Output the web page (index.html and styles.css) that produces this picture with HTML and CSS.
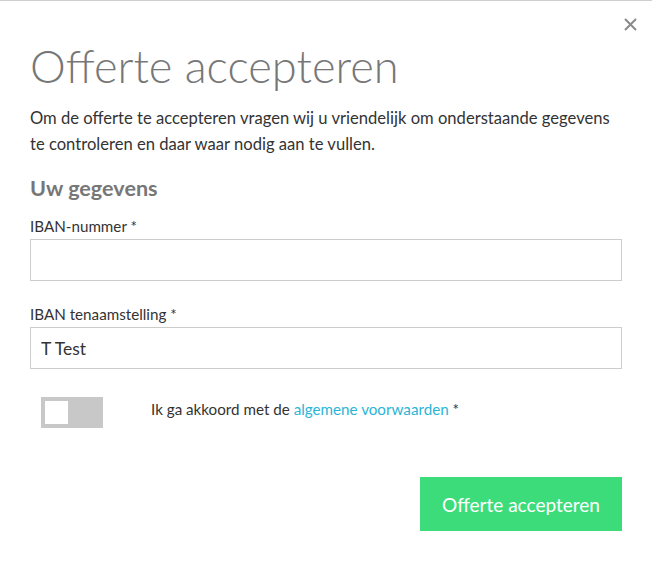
FILE: index.html
```html
<!DOCTYPE html>
<html lang="nl">
<head>
<meta charset="utf-8">
<title>Offerte accepteren</title>
<link rel="stylesheet" href="styles.css">
</head>
<body>
<div class="modal">
  <button class="close" aria-label="Sluiten">
    <svg width="13" height="13" viewBox="0 0 13 13"><path d="M1 1L12 12M12 1L1 12" stroke="#8a8a8a" stroke-width="2" fill="none"/></svg>
  </button>
  <h1 class="title">Offerte accepteren</h1>
  <p class="intro">Om de offerte te accepteren vragen wij u vriendelijk om onderstaande gegevens te controleren en daar waar nodig aan te vullen.</p>
  <h2 class="subtitle">Uw gegevens</h2>
  <div class="field">
    <label class="label">IBAN-nummer *</label>
    <input class="input" type="text" value="">
  </div>
  <div class="field">
    <label class="label">IBAN tenaamstelling *</label>
    <input class="input" type="text" value="T Test">
  </div>
  <div class="agree">
    <span class="toggle"><span class="knob"></span></span>
    <span class="agree-text">Ik ga akkoord met de <a class="link" href="#">algemene voorwaarden</a> *</span>
  </div>
  <div class="actions">
    <button class="submit">Offerte accepteren</button>
  </div>
</div>
</body>
</html>
```

FILE: styles.css
```css
* { box-sizing: border-box; }
html, body { margin: 0; padding: 0; background: #fff; }
body { font-family: Lato, "Open Sans", sans-serif; color: #333; }
.modal {
  position: relative;
  border-top: 1px solid #cfcfcf;
  padding: 0 30px;
  height: 577px;
}
.close {
  position: absolute;
  top: 17px;
  right: 15px;
  background: none;
  border: 0;
  padding: 0;
  width: 13px;
  height: 13px;
  display: flex;
}
.title {
  margin: 0;
  padding-top: 38px;
  font-weight: 300;
  font-size: 45.2px;
  line-height: 54px;
  color: #777;
}
.intro {
  margin: 12px 0 0;
  font-size: 16.6px;
  line-height: 26px;
  color: #333;
  max-width: 592px;
}
.subtitle {
  margin: 17px 0 0;
  font-size: 21.6px;
  line-height: 28px;
  font-weight: 700;
  color: #777;
}
.field { display: flex; flex-direction: column; }
.field + .field { margin-top: 23px; }
.label {
  margin-top: 14px;
  font-size: 15.2px;
  line-height: 20px;
  color: #333;
  margin-bottom: 3px;
}
.field + .field .label { margin-top: 0; }
.input {
  width: 592px;
  height: 42px;
  border: 1px solid #ccc;
  padding: 0 10px;
  font-family: inherit;
  font-size: 17.5px;
  color: #333;
  outline: none;
}
.agree {
  display: flex;
  align-items: center;
  margin-top: 28px;
  padding-left: 11px;
}
.toggle {
  width: 62px;
  height: 31px;
  background: #c8c8c8;
  padding: 4px;
  display: flex;
}
.knob { width: 23px; height: 23px; background: #fff; }
.agree-text {
  margin-left: 48px;
  font-size: 15.2px;
  line-height: 20px;
  color: #333;
  margin-top: -7px;
}
.link { color: #2bb5d6; text-decoration: none; }
.actions {
  display: flex;
  justify-content: flex-end;
  margin-top: 49px;
}
.submit {
  width: 202px;
  height: 54px;
  background: #3ddc7a;
  border: 0;
  color: #fff;
  font-family: inherit;
  font-size: 19px;
  font-weight: 400;
  padding: 0;
}
```
